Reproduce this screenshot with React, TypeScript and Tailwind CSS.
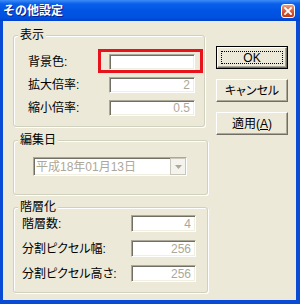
import React from 'react';

// --- 共通スタイル ---
const FONT = "font-['Liberation_Sans','Noto_Sans_CJK_JP',sans-serif]";
const sunken =
  'border border-t-[#ACA899] border-l-[#ACA899] border-r-white border-b-white shadow-[inset_1px_1px_0_#716F64,inset_-1px_-1px_0_#F1EFE2] bg-white';

const Field = ({ value, w, h }: { value?: string; w: string; h: string }) => (
  <div className={`${sunken} ${w} ${h} flex items-center justify-end pr-[4px] text-[12px] leading-none text-[#ACA899]`}>
    {value}
  </div>
);

const Group = ({ title, className, inner, children }: { title: string; className: string; inner: string; children: React.ReactNode }) => (
  <fieldset className={`border border-[#D0D0BF] rounded-[3px] shadow-[inset_1px_1px_0_#fff,1px_1px_0_#fff] ${className}`}>
    <legend className="ml-[4px] px-[2px] bg-[#ECE9D8] text-[12px] leading-[14px] text-black">{title}</legend>
    <div className={inner}>{children}</div>
  </fieldset>
);

const Button = ({ children, primary }: { children: React.ReactNode; primary?: boolean }) => (
  <div className={`w-[72px] h-[23px] ${primary ? 'border border-black' : ''}`}>
    <div className="relative h-full border border-t-white border-l-white border-r-[#716F64] border-b-[#716F64] shadow-[inset_-1px_-1px_0_#ACA899] flex items-center justify-center text-[12px] leading-none text-black [font-feature-settings:'palt']">
      {children}
      {primary && <div className="absolute inset-[3px] border border-dotted border-black" />}
    </div>
  </div>
);

export default function App() {
  return (
    <div className={`w-[300px] h-[304px] flex flex-col bg-[#0A4BD6] ${FONT}`}>
      {/* タイトルバー */}
      <div className="h-[21px] flex items-center bg-[linear-gradient(to_bottom,#3D8EF7_0%,#0A5FEA_18%,#0055E5_50%,#0150DE_85%,#0041CC_100%)]">
        <span className="pl-[3px] text-[12px] font-bold text-white leading-none [text-shadow:1px_1px_0_#0A1E8C]">その他設定</span>
        <div className="ml-auto mr-[5px] w-[14px] h-[14px] rounded-[3px] border border-white bg-[linear-gradient(to_bottom,#EB9C82,#D2532F_60%,#C13B14)] flex items-center justify-center">
          <svg width="8" height="8" viewBox="0 0 8 8">
            <path d="M1 1L7 7M7 1L1 7" stroke="#fff" strokeWidth="1.8" strokeLinecap="square" />
          </svg>
        </div>
      </div>

      {/* 本体 */}
      <div className="flex-1 ml-[3px] mr-[4px] mb-[4px] bg-[#ECE9D8] flex pl-[10px]">
        <div className="w-[195px] flex flex-col pt-[7px]">
          <Group title="表示" className="w-[192px]" inner="pl-[14px] pr-[9px] pt-[12px] pb-[10px] flex flex-col gap-[7px]">
            <div className="relative flex items-center justify-between">
              <span className="text-[12px] leading-none">背景色:</span>
              <Field w="w-[86px]" h="h-[16px]" />
              <div className="absolute left-[70px] -top-[5px] w-[105px] h-[24px] border-[3px] border-[#E8121C]" />
            </div>
            <div className="flex items-center justify-between">
              <span className="text-[12px] leading-none">拡大倍率:</span>
              <Field value="2" w="w-[86px]" h="h-[16px]" />
            </div>
            <div className="flex items-center justify-between">
              <span className="text-[12px] leading-none">縮小倍率:</span>
              <Field value="0.5" w="w-[86px]" h="h-[16px]" />
            </div>
          </Group>

          <Group title="編集日" className="mt-[6px] w-[195px]" inner="pl-[19px] pt-[10px] pb-[18px]">
            <div className={`${sunken} w-[154px] h-[19px] flex items-center`}>
              <span className="flex-1 pl-[2px] text-[12px] leading-none text-[#ACA899] [font-feature-settings:'palt']">平成18年01月13日</span>
              <div className="w-[16px] h-full border border-[#C9C7BA] bg-[#F4F3EE] flex items-center justify-center">
                <svg width="7" height="4" viewBox="0 0 7 4">
                  <path d="M0 0H7L3.5 4Z" fill="#ACA899" />
                </svg>
              </div>
            </div>
          </Group>

          <Group title="階層化" className="mt-[5px] w-[195px]" inner="pl-[8px] pr-[11px] pt-[1px] pb-[10px] flex flex-col gap-[8px]">
            <div className="flex items-center justify-between">
              <span className="text-[12px] leading-none">階層数:</span>
              <Field value="4" w="w-[65px]" h="h-[17px]" />
            </div>
            <div className="flex items-center justify-between">
              <span className="text-[12px] leading-none [font-feature-settings:'palt']">分割ピクセル幅:</span>
              <Field value="256" w="w-[65px]" h="h-[17px]" />
            </div>
            <div className="flex items-center justify-between">
              <span className="text-[12px] leading-none [font-feature-settings:'palt']">分割ピクセル高さ:</span>
              <Field value="256" w="w-[65px]" h="h-[17px]" />
            </div>
          </Group>
        </div>

        {/* ボタン */}
        <div className="ml-[8px] pt-[25px] flex flex-col gap-[10px]">
          <Button primary>OK</Button>
          <Button>キャンセル</Button>
          <Button>
            適用(<span className="underline">A</span>)
          </Button>
        </div>
      </div>
    </div>
  );
}
